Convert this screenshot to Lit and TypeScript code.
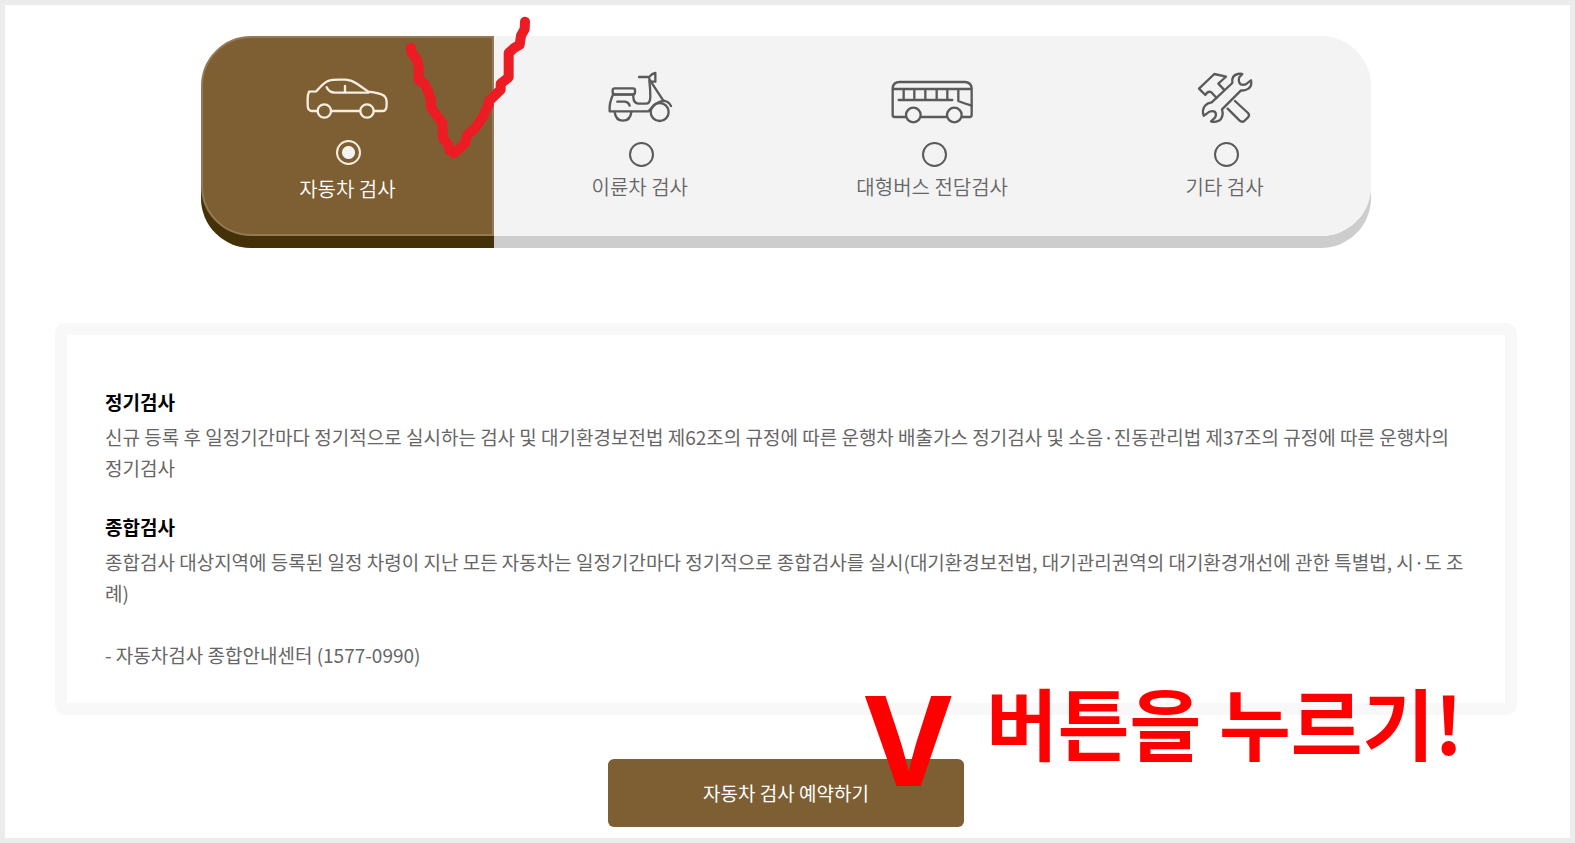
import { LitElement, html, css, svg } from "lit";
import { customElement, state } from "lit/decorators.js";
import { classMap } from "lit/directives/class-map.js";

interface Inspection {
  id: string;
  label: string;
  viewBox: string;
  art: unknown;
}

const INSPECTIONS: Inspection[] = [
  {
    id: "car",
    label: "자동차 검사",
    viewBox: "37 30 270 162",
    art: svg`
      <path d="M83 153H66Q54 152 54 136V116Q54 104 58 95L80 94Q104 66 118 62Q124 59 150 59H168Q186 60 203 72L236 95Q272 99 284 108Q292 116 291 132Q291 153 280 153H253M125 153H211"/>
      <circle cx="104" cy="153" r="20"/><circle cx="232" cy="153" r="20"/>
      <path d="M111 82Q118 98 136 98H236M166 78V98"/>`,
  },
  {
    id: "scooter",
    label: "이륜차 검사",
    viewBox: "74 60 270 162",
    art: svg`
      <path d="M206 81H236M236 81Q246 70 255 69V95H242Q236 90 236 81"/>
      <path d="M237 92Q240 115 240 140Q240 161 226 161H205Q190 160 189 142V134"/>
      <path d="M243 97L279 152Q256 158 248 170L234 184H118Q116 158 128 134H189"/>
      <rect x="127" y="115" width="67" height="18" rx="6"/>
      <path d="M279 152Q295 154 302 168"/>
      <circle cx="268" cy="186" r="27"/>
      <path d="M133 186Q136 212 158 212Q180 212 183 186"/>
      <path d="M141 155H164Q175 157 178 167"/>`,
  },
  {
    id: "bus",
    label: "대형버스 전담검사",
    viewBox: "112 60 270 162",
    art: svg`
      <path d="M168 201H135Q129 201 129 195V114Q131 96 150 96H346Q364 97 366 114V195Q366 201 360 201H338M214 201H290M129 117H366"/>
      <circle cx="191" cy="195" r="22"/><circle cx="314" cy="195" r="22"/>
      <path d="M147 150H308M162 118V150M194 118V150M227 118V150M261 118V150M293 118V150M326 118V153Q342 160 366 167"/>`,
  },
  {
    id: "etc",
    label: "기타 검사",
    viewBox: "89 150 270 162",
    art: svg`
      <path d="M221 209L204 191L216 180L227 170L192 162L146 206L165 225Q172 212 182 216L199 234"/>
      <path d="M184 247L246 189Q243 166 262 162Q272 160 276 162L267 172Q262 184 271 193Q281 196 289 191L302 181Q306 198 294 206Q284 213 272 211L215 268Q221 288 208 301Q196 308 182 304L194 293Q200 282 193 275Q180 270 168 282L160 287Q154 271 164 257Q172 248 184 247Z"/>
      <path d="M254 243L293 279Q299 286 293 292L282 303Q275 308 268 302L232 266"/>`,
  },
];

@customElement("app-root")
export class AppRoot extends LitElement {
  static styles = css`
    :host {
      display: block;
      font-family: "Noto Sans CJK KR", "Noto Sans", sans-serif;
      color: #666;
    }
    *, *::before { box-sizing: border-box; }
    .page {
      border: 5px solid #ececec;
      padding: 31px 53px 11px 50px;
      background: #fff;
      overflow: hidden;
    }
    .tabs {
      position: relative;
      width: 80%;
      margin: 0 auto 87px;
      padding: 0;
      border: 0;
      display: grid;
      grid-template-columns: repeat(4, 1fr);
      min-width: 0;
      border-radius: 50px;
      background: #f3f3f3;
      box-shadow: 0 12px 0 #cdcdcd;
    }
    .tab {
      display: flex;
      flex-direction: column;
      align-items: center;
      height: 200px;
      padding-top: 34px;
      font-size: 20px;
      font-weight: 350;
      line-height: 30px;
      cursor: pointer;
      color: #666;
    }
    .tab:first-of-type { border-radius: 50px 0 0 50px; }
    .tab:last-of-type { border-radius: 0 50px 50px 0; }
    .tab.on {
      padding-top: 32px;
      border: 2px solid #937a54;
      background: #7d5f33;
      box-shadow: 0 12px 0 #443108;
      color: #fff;
    }
    .icon {
      width: 90px;
      height: 54px;
      fill: none;
      stroke: #5a5a5a;
      stroke-width: 7;
      stroke-linecap: round;
      stroke-linejoin: round;
    }
    .on .icon { stroke: #f6eee0; }
    .radio {
      appearance: none;
      width: 25px;
      height: 25px;
      margin: 18px 0 5px 4px;
      border: 2px solid #5a5a5a;
      border-radius: 50%;
      cursor: pointer;
    }
    .on .radio {
      margin: 16px 0 9px 2px;
      border-color: #f6eee0;
      background: radial-gradient(circle, #f3f3f3 6px, transparent 7px);
    }
    .scribble {
      position: absolute;
      left: 202px;
      top: -23px;
      width: 133px;
      height: 150px;
      fill: none;
      stroke: #ed1c24;
      stroke-width: 30;
      stroke-linecap: round;
      stroke-linejoin: round;
      pointer-events: none;
    }
    .info {
      border: 12px solid #f8f8f8;
      border-radius: 10px;
      padding: 51px 38px 33px;
      font-size: 19px;
      line-height: 31px;
    }
    .title {
      margin: 0 0 4px;
      font-size: inherit;
      font-weight: 700;
      color: #000;
    }
    .text { margin: 0 0 28px; }
    .contact { margin: 31px 0 0; }
    .action {
      position: relative;
      display: flex;
      justify-content: center;
      margin-top: 44px;
    }
    .reserve {
      width: 356px;
      height: 68px;
      border: 0;
      border-radius: 6px;
      background: #7d5f33;
      color: #fff;
      font: 400 19px/28px "Noto Sans CJK KR", sans-serif;
      cursor: pointer;
    }
    .mark, .note {
      position: absolute;
      color: #f00;
      white-space: nowrap;
      font-weight: 700;
      pointer-events: none;
    }
    .mark {
      left: calc(50% + 76px);
      top: -78px;
      font-family: Inter, sans-serif;
      font-size: 124px;
      line-height: 120px;
    }
    .note {
      left: calc(50% + 200px);
      top: -88px;
      font-size: 78px;
      line-height: 100px;
    }
  `;

  @state() private selected = "car";

  render() {
    const current = INSPECTIONS.find((i) => i.id === this.selected)!;
    return html`
      <main class="page">
        <fieldset class="tabs" aria-label="검사">
          ${INSPECTIONS.map(
            (i) => html`
              <label class=${classMap({ tab: true, on: i.id === this.selected })}>
                <svg class="icon" viewBox=${i.viewBox} aria-hidden="true">${i.art}</svg>
                <input
                  class="radio"
                  type="radio"
                  name="inspection"
                  .checked=${i.id === this.selected}
                  @change=${() => (this.selected = i.id)}
                />
                <span>${i.label}</span>
              </label>
            `
          )}
          <svg class="scribble" viewBox="640 40 399 450" aria-hidden="true">
            <path d="M664 144L665 158L676 171L685 190L687 206V240L705 253L717 280L724 302V323L743 350L758 370L760 415L776 435L780 452L792 460L800 456L827 430L832 407L858 383L877 355L897 315V305L933 270V252L957 233V160L972 146L990 135L994 108L1005 88L1006 66"/>
          </svg>
        </fieldset>

        <section class="info">
          <h2 class="title">정기검사</h2>
          <p class="text">신규 등록 후 일정기간마다 정기적으로 실시하는 검사 및 대기환경보전법 제62조의 규정에 따른 운행차 배출가스 정기검사 및 소음·진동관리법 제37조의 규정에 따른 운행차의 정기검사</p>
          <h2 class="title">종합검사</h2>
          <p class="text">종합검사 대상지역에 등록된 일정 차령이 지난 모든 자동차는 일정기간마다 정기적으로 종합검사를 실시(대기환경보전법, 대기관리권역의 대기환경개선에 관한 특별법, 시·도 조례)</p>
          <p class="contact">- 자동차검사 종합안내센터 (1577-0990)</p>
        </section>

        <div class="action">
          <button class="reserve" type="button">${current.label} 예약하기</button>
          <span class="mark">V</span>
          <span class="note">버튼을 누르기!</span>
        </div>
      </main>
    `;
  }
}
